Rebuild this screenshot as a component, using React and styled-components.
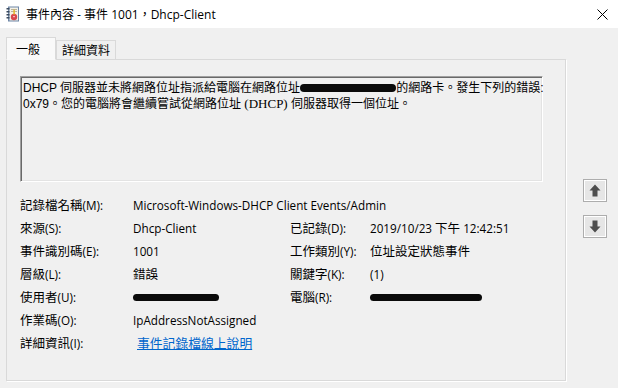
import { Fragment } from 'react'
import styled, { createGlobalStyle } from 'styled-components'

const GlobalStyle = createGlobalStyle`
  html, body {
    margin: 0;
    padding: 0;
    background: #f0f0f0;
  }
  body {
    font-family: "Segoe UI", "Open Sans", "Noto Sans CJK TC", sans-serif;
    font-size: 12px;
    color: #000;
  }
`

const Window = styled.div`
  width: 618px;
  height: 388px;
  background: #f0f0f0;
  overflow: hidden;
  display: flex;
  flex-direction: column;
`
const TitleBar = styled.div`
  height: 28px;
  background: #fff;
  display: flex;
  align-items: center;
  padding-left: 6px;
  flex-shrink: 0;
`
const Title = styled.span`
  margin-left: 6px;
  font-size: 12px;
`
const Close = styled.div`
  margin-left: auto;
  width: 28px;
  height: 28px;
  display: flex;
  align-items: center;
  justify-content: center;
  margin-right: 2px;
`
const Body = styled.div`
  display: flex;
  padding: 8px 0 0 6px;
`
const Main = styled.div`
  width: 560px;
  display: flex;
  flex-direction: column;
`
const TabStrip = styled.div`
  display: flex;
  align-items: flex-end;
  height: 23px;
  position: relative;
  z-index: 1;
`
const Tab = styled.div`
  height: ${p => (p.$active ? '23px' : '20px')};
  padding: 0 ${p => (p.$active ? '15px' : '5px')} 0 ${p => (p.$active ? '9px' : '5px')};
  background: ${p => (p.$active ? '#f9f9f9' : '#f0f0f0')};
  border: 1px solid #d9d9d9;
  border-bottom-color: ${p => (p.$active ? '#f9f9f9' : '#d9d9d9')};
  box-sizing: border-box;
  display: flex;
  align-items: center;
  font-size: 12px;
  margin-bottom: -1px;
`
const Panel = styled.div`
  height: 322px;
  box-sizing: border-box;
  border: 1px solid #d9d9d9;
  box-shadow: 1px 1px 0 #fff;
  background: #f0f0f0;
  padding: 16px 0 0 13px;
`
const MessageBox = styled.div`
  width: 523px;
  height: 106px;
  box-sizing: border-box;
  border: 1px solid;
  border-color: #a0a0a0 #fff #fff #a0a0a0;
  box-shadow: inset 1px 1px 0 #696969, inset -1px -1px 0 #e3e3e3;
  padding: 3px 0 0 2px;
  font-family: "Liberation Sans", "Noto Sans CJK TC", sans-serif;
  font-size: 12px;
  line-height: 16px;
`
const Line = styled.div`
  white-space: nowrap;
`
const Serif = styled.span`
  font-family: "Liberation Serif", serif;
  font-size: 13px;
`
const Redact = styled.span`
  display: inline-block;
  width: ${p => p.$w}px;
  height: ${p => p.$h || 8}px;
  background: #0a0a0a;
  border-radius: 4px;
  vertical-align: middle;
  margin-top: -2px;
`
const Details = styled.div`
  margin-top: 11px;
  display: grid;
  grid-template-columns: 113px 157px 80px 1fr;
  grid-auto-rows: 23px;
  align-items: center;
  font-size: 11.7px;
`
const Label = styled.div`
  white-space: nowrap;
`
const Value = styled.div`
  white-space: nowrap;
  grid-column: ${p => (p.$span ? 'span 3' : 'auto')};
`
const Cjk = styled.span`
  font-family: "Noto Sans CJK TC", sans-serif;
  font-size: ${p => p.$size || 12.5}px;
`
const HelpLink = styled.a`
  color: #0066cc;
  text-decoration: underline;
  margin-left: 4px;
`
const SideButtons = styled.div`
  display: flex;
  flex-direction: column;
  gap: 13px;
  margin-left: 17px;
  padding-top: 143px;
`
const ArrowButton = styled.button`
  width: 24px;
  height: 23px;
  padding: 0;
  border: 1px solid #adadad;
  background: #e6e6e6;
  box-shadow: inset 1px 1px 0 #fff, inset -1px -1px 0 #fff;
  display: flex;
  align-items: center;
  justify-content: center;
`

// wrap runs of CJK characters so they get their own size
const Mixed = ({ text, size }) =>
  text.split(/([\u3000-\u9fff\uff00-\uffef]+)/).map((part, i) =>
    /[\u3000-\u9fff\uff00-\uffef]/.test(part) ? (
      <Cjk key={i} $size={size}>{part}</Cjk>
    ) : (
      part
    )
  )

const LogIcon = () => (
  <svg width="14" height="16" viewBox="0 0 14 16">
    <rect x="2" y="0.5" width="11" height="15" fill="#6f87a8" />
    <rect x="3.5" y="1.5" width="8.5" height="13" fill="#f4f1e6" />
    <g fill="#3b4a5e">
      <rect x="0.5" y="2" width="3" height="1.5" />
      <rect x="0.5" y="5" width="3" height="1.5" />
      <rect x="0.5" y="8" width="3" height="1.5" />
      <rect x="0.5" y="11" width="3" height="1.5" />
    </g>
    <rect x="5" y="3" width="6" height="1" fill="#b9b3a0" />
    <rect x="5" y="5" width="6" height="1" fill="#b9b3a0" />
    <circle cx="8" cy="11" r="3.2" fill="#d9474f" />
    <rect x="7.4" y="3.6" width="1.4" height="5" fill="#e8b620" />
    <rect x="7.4" y="10" width="1.2" height="1.2" fill="#fff" />
  </svg>
)

const CloseIcon = () => (
  <svg width="11" height="11" viewBox="0 0 11 11">
    <path d="M0.5 0.5 L10.5 10.5 M10.5 0.5 L0.5 10.5" stroke="#000" strokeWidth="1" />
  </svg>
)

const UpArrow = () => (
  <svg width="12" height="13" viewBox="0 0 12 13">
    <path d="M6 0.5 L11.5 6.5 L8.5 6.5 L8.5 12.5 L3.5 12.5 L3.5 6.5 L0.5 6.5 Z" fill="#4d4d4d" />
  </svg>
)

const DownArrow = () => (
  <svg width="12" height="13" viewBox="0 0 12 13">
    <path d="M6 12.5 L11.5 6.5 L8.5 6.5 L8.5 0.5 L3.5 0.5 L3.5 6.5 L0.5 6.5 Z" fill="#4d4d4d" />
  </svg>
)

const rows = [
  ['來源(S):', 'Dhcp-Client', '已記錄(D):', '2019/10/23 下午 12:42:51'],
  ['事件識別碼(E):', '1001', '工作類別(Y):', '位址設定狀態事件'],
  ['層級(L):', '錯誤', '關鍵字(K):', '(1)'],
]

export default function App() {
  return (
    <Window>
      <GlobalStyle />
      <TitleBar>
        <LogIcon />
        <Title>事件內容 - 事件 1001，Dhcp-Client</Title>
        <Close>
          <CloseIcon />
        </Close>
      </TitleBar>
      <Body>
        <Main>
          <TabStrip>
            <Tab $active>一般</Tab>
            <Tab>詳細資料</Tab>
          </TabStrip>
          <Panel>
            <MessageBox>
              <Line>
                DHCP 伺服器並未將網路位址指派給電腦在網路位址<Redact $w={96} />的網路卡。發生下列的錯誤:
              </Line>
              <Line>
                0x79。您的電腦將會繼續嘗試從網路位址 <Serif>(DHCP)</Serif> 伺服器取得一個位址。
              </Line>
            </MessageBox>
            <Details>
              <Label><Mixed text="記錄檔名稱(M):" /></Label>
              <Value $span>Microsoft-Windows-DHCP Client Events/Admin</Value>
              {rows.map(r => (
                <Fragment key={r[0]}>
                  <Label><Mixed text={r[0]} /></Label>
                  <Value><Mixed text={r[1]} /></Value>
                  <Label><Mixed text={r[2]} /></Label>
                  <Value><Mixed text={r[3]} /></Value>
                </Fragment>
              ))}
              <Label><Mixed text="使用者(U):" /></Label>
              <Value>
                <Redact $w={86} $h={7} />
              </Value>
              <Label><Mixed text="電腦(R):" /></Label>
              <Value>
                <Redact $w={112} $h={7} />
              </Value>
              <Label><Mixed text="作業碼(O):" /></Label>
              <Value $span>IpAddressNotAssigned</Value>
              <Label><Mixed text="詳細資訊(I):" /></Label>
              <Value $span>
                <HelpLink href="#"><Mixed text="事件記錄檔線上說明" size={12.8} /></HelpLink>
              </Value>
            </Details>
          </Panel>
        </Main>
        <SideButtons>
          <ArrowButton>
            <UpArrow />
          </ArrowButton>
          <ArrowButton>
            <DownArrow />
          </ArrowButton>
        </SideButtons>
      </Body>
    </Window>
  )
}
